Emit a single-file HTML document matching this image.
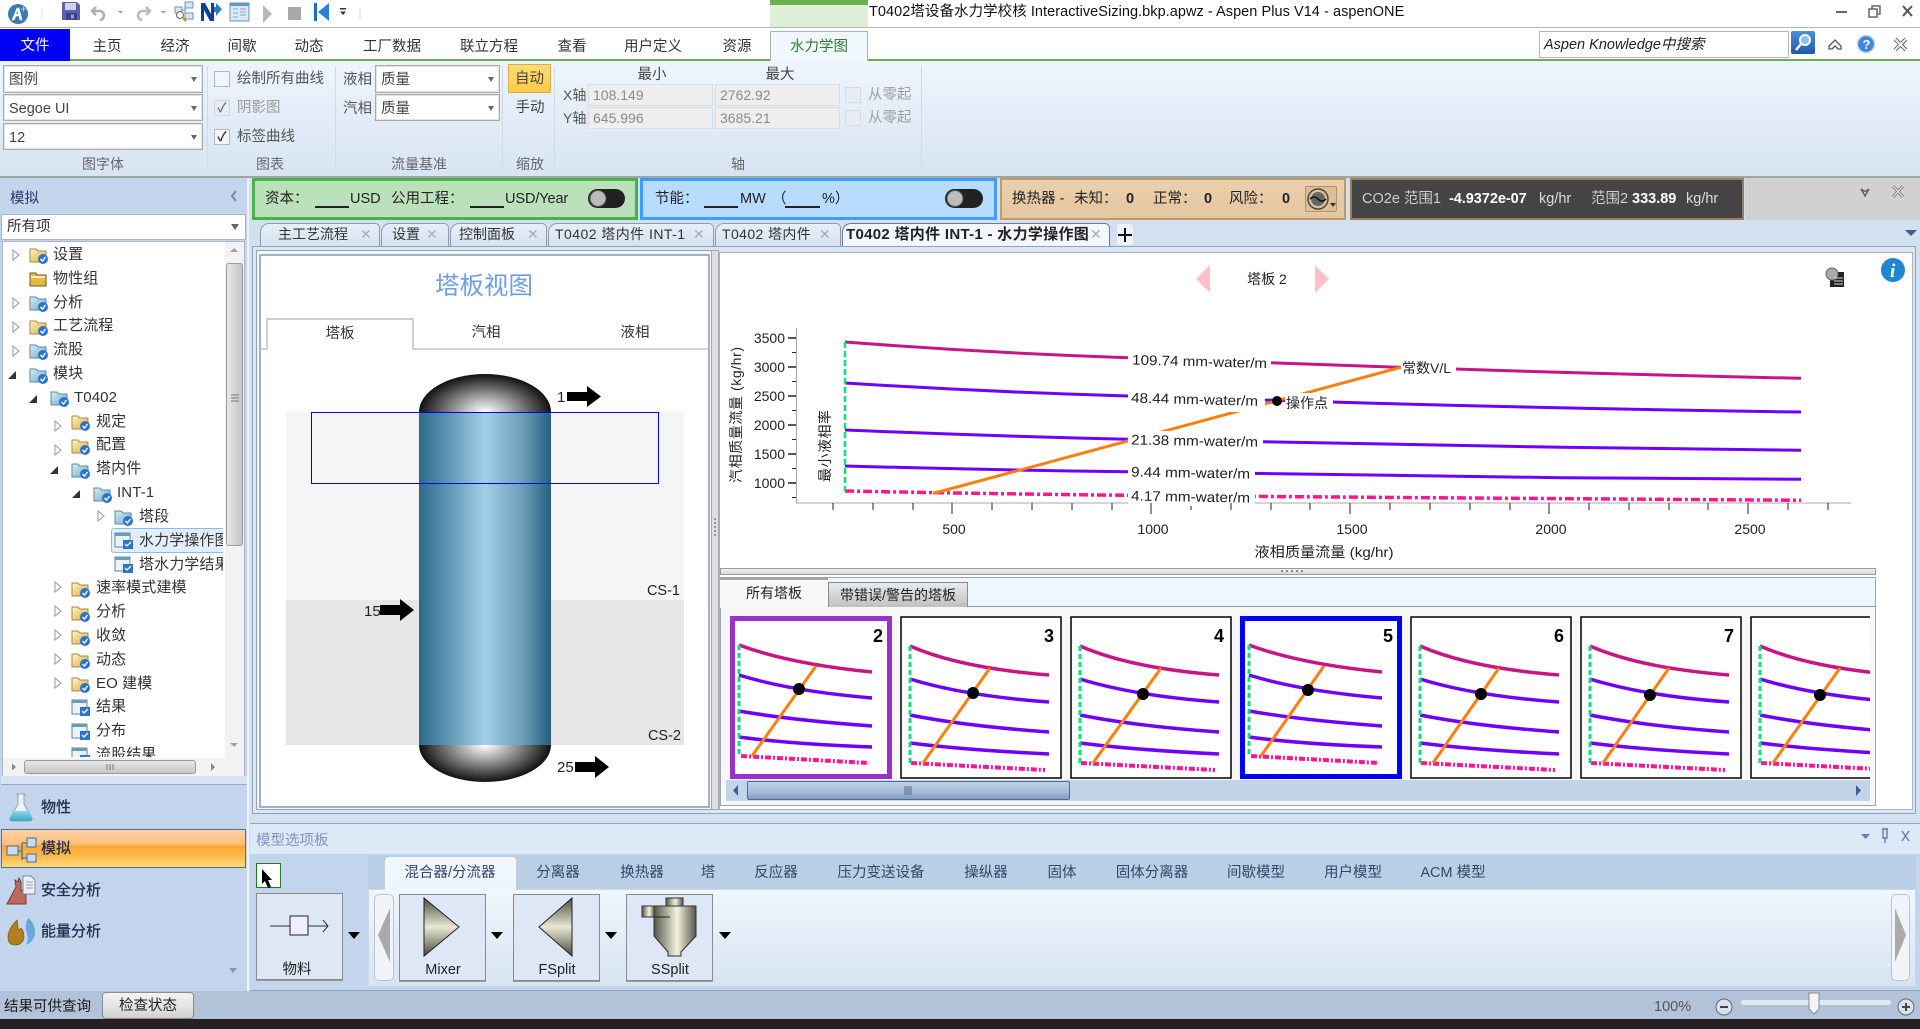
<!DOCTYPE html>
<html><head><meta charset="utf-8"><title>Aspen Plus</title>
<style>
html,body{margin:0;padding:0}
body{position:relative;width:1920px;height:1029px;overflow:hidden;background:#d3e0f0;font-family:"Liberation Sans","Noto Sans CJK SC",sans-serif;font-size:14px;color:#333}
.a{position:absolute;box-sizing:border-box}
.t{position:absolute;white-space:nowrap;line-height:20px;height:20px}
.c{transform:translateX(-50%)}
.combo{position:absolute;box-sizing:border-box;background:#fff;border:1px solid #a9a9a9;box-shadow:inset 0 0 0 1px #e4e4e4;font-size:14.5px;line-height:28px;padding-left:5px;color:#444}
.combo:after{content:"";position:absolute;right:5px;top:11px;border:3.5px solid transparent;border-top:5px solid #666}
.cb{position:absolute;box-sizing:border-box;width:16px;height:16px;border:1px solid #b0b8c4;background:#f2f5f9;border-radius:1px;text-align:center;line-height:14px;font-size:13px;font-weight:bold;color:#333}
.inp{position:absolute;box-sizing:border-box;background:#eee;border:1px solid #ddd;color:#8a8a8a;font-size:14px;line-height:20px;padding-left:4px;height:22px;width:125px}
.sep{position:absolute;width:1px;top:66px;height:104px;background:#cfdbe9}
.doc{position:absolute;box-sizing:border-box;top:223px;height:23px;background:linear-gradient(#e6eef8,#d6e2f1);border:1px solid #8b9cb0;border-bottom:none;border-radius:9px 5px 0 0;font-size:14px;line-height:21px;color:#333;white-space:nowrap}
.x{position:absolute;color:#a2adb9;font-size:14px;top:224px;line-height:20px}
.tr{position:absolute;white-space:nowrap;font-size:15px;line-height:20px;color:#333;letter-spacing:.1px}
.pt{position:absolute;top:863px;line-height:20px;font-size:14.5px;color:#33466b;white-space:nowrap;transform:translateX(-50%)}
.tool{position:absolute;box-sizing:border-box;top:894px;height:87px;width:87px;background:#dde7f6;border:1px solid #8a8a8a;box-shadow:0 1px 0 #999}
.dk{position:absolute;white-space:nowrap;line-height:20px;left:41px;font-size:15px;color:#1d2f52;-webkit-text-stroke:.3px #1d2f52}
.st{position:absolute;white-space:nowrap;line-height:20px;top:189px;font-size:14.5px;color:#222}
.ul{position:absolute;top:206px;height:2px;background:#222}
.dk2{position:absolute;white-space:nowrap;line-height:20px;top:189px;font-size:14.5px;color:#cfcfcf}
</style></head><body>

<!-- title bar -->
<div class="a" style="left:0;top:0;width:1920px;height:28px;background:#fff;border-bottom:1px solid #b6b6b6"></div>
<div class="a" style="left:770px;top:0;width:98px;height:27px;background:#deefd9"></div>
<div class="a" style="left:770px;top:0;width:98px;height:5px;background:#6ab14c"></div>
<div class="t" style="left:869px;top:2px;font-size:14.5px;color:#111;letter-spacing:.05px">T0402塔设备水力学校核 InteractiveSizing.bkp.apwz - Aspen Plus V14 - aspenONE</div>

<!-- menu -->
<div class="a" style="left:0;top:28px;width:1920px;height:33px;background:#fff;border-bottom:2px solid #6ab14c"></div>
<div class="a" style="left:0;top:29px;width:70px;height:32px;background:#0000fa"></div>
<div class="t c" style="left:35px;top:36px;color:#fff;font-size:14.5px">文件</div>
<div class="a" style="left:770px;top:31px;width:98px;height:31px;background:#f0f7fd;border:1px solid #aab4bd;border-bottom:none"></div>
<div class="t c" style="left:107px;top:37px;font-size:14.5px">主页</div>
<div class="t c" style="left:175px;top:37px;font-size:14.5px">经济</div>
<div class="t c" style="left:242px;top:37px;font-size:14.5px">间歇</div>
<div class="t c" style="left:309px;top:37px;font-size:14.5px">动态</div>
<div class="t c" style="left:392px;top:37px;font-size:14.5px">工厂数据</div>
<div class="t c" style="left:489px;top:37px;font-size:14.5px">联立方程</div>
<div class="t c" style="left:572px;top:37px;font-size:14.5px">查看</div>
<div class="t c" style="left:653px;top:37px;font-size:14.5px">用户定义</div>
<div class="t c" style="left:737px;top:37px;font-size:14.5px">资源</div>
<div class="t c" style="left:819px;top:37px;font-size:14.5px;color:#2e7d32">水力学图</div>

<!-- search -->
<div class="a" style="left:1539px;top:31px;width:250px;height:27px;background:#fff;border:1px solid #b5b5b5"></div>
<div class="t" style="left:1544px;top:35px;font-style:italic;font-size:14.5px;color:#222">Aspen Knowledge中搜索</div>

<!-- ribbon -->
<div class="a" style="left:0;top:61px;width:1920px;height:117px;background:linear-gradient(#eef5fd,#d7e4f2);border-bottom:2px solid #9aa7a5"></div>
<div class="sep" style="left:207px"></div><div class="sep" style="left:335px"></div><div class="sep" style="left:502px"></div><div class="sep" style="left:554px"></div><div class="sep" style="left:921px"></div>
<div class="combo" style="left:3px;top:65px;width:200px;height:28px">图例</div>
<div class="combo" style="left:3px;top:94px;width:200px;height:27px">Segoe UI</div>
<div class="combo" style="left:3px;top:123px;width:200px;height:27px">12</div>
<div class="cb" style="left:214px;top:71px"></div>
<div class="t" style="left:237px;top:69px;font-size:14.5px;color:#555">绘制所有曲线</div>
<div class="cb" style="left:214px;top:100px;color:#777;background:#e8edf3;border-color:#d0d6de">✓</div>
<div class="t" style="left:237px;top:98px;font-size:14.5px;color:#9a9a9a">阴影图</div>
<div class="cb" style="left:214px;top:129px">✓</div>
<div class="t" style="left:237px;top:127px;font-size:14.5px;color:#555">标签曲线</div>
<div class="t" style="left:343px;top:70px;font-size:14.5px;color:#555">液相</div>
<div class="t" style="left:343px;top:99px;font-size:14.5px;color:#555">汽相</div>
<div class="combo" style="left:375px;top:65px;width:125px;height:28px">质量</div>
<div class="combo" style="left:375px;top:94px;width:125px;height:27px">质量</div>
<div class="a" style="left:508px;top:64px;width:43px;height:29px;background:linear-gradient(#ffdc75,#ffcb45);border:1px solid #d9ac4e;text-align:center;line-height:29px;font-size:14.5px;color:#444">自动</div>
<div class="t c" style="left:530px;top:98px;font-size:14.5px;color:#444">手动</div>
<div class="t c" style="left:652px;top:65px;font-size:14.5px;color:#444">最小</div>
<div class="t c" style="left:780px;top:65px;font-size:14.5px;color:#444">最大</div>
<div class="t" style="left:563px;top:85px;font-size:14px;color:#555">X轴</div>
<div class="t" style="left:563px;top:108px;font-size:14px;color:#555">Y轴</div>
<div class="inp" style="left:588px;top:84px">108.149</div>
<div class="inp" style="left:715px;top:84px">2762.92</div>
<div class="inp" style="left:588px;top:107px">645.996</div>
<div class="inp" style="left:715px;top:107px">3685.21</div>
<div class="cb" style="left:845px;top:87px;background:#e9edf2;border-color:#d6dbe2"></div>
<div class="cb" style="left:845px;top:110px;background:#e9edf2;border-color:#d6dbe2"></div>
<div class="t" style="left:868px;top:85px;font-size:14.5px;color:#a0a0a0">从零起</div>
<div class="t" style="left:868px;top:108px;font-size:14.5px;color:#a0a0a0">从零起</div>
<div class="t c" style="left:103px;top:154px;color:#666">图字体</div>
<div class="t c" style="left:270px;top:154px;color:#666">图表</div>
<div class="t c" style="left:419px;top:154px;color:#666">流量基准</div>
<div class="t c" style="left:530px;top:154px;color:#666">缩放</div>
<div class="t c" style="left:738px;top:154px;color:#666">轴</div>

<!-- left panel -->
<div class="a" style="left:0;top:178px;width:249px;height:813px;background:#c3d5ec;border-right:2px solid #eef3f9"></div>
<div class="t" style="left:10px;top:189px;font-size:14.5px;color:#24396a">模拟</div>
<div class="a" style="left:1px;top:214px;width:245px;height:26px;background:#fff;border:1px solid #a9b5c4"></div>
<div class="t" style="left:7px;top:217px;font-size:14.5px">所有项</div>
<div class="a" style="left:231px;top:224px;border:4px solid transparent;border-top:6px solid #666"></div>
<div class="a" style="left:2px;top:241px;width:243px;height:535px;background:#fff;border:1px solid #a9b8ca"></div>
<div class="a" style="left:1px;top:776px;width:246px;height:9px;background:#d6e3f2;border-bottom:1px solid #93a9c6"></div>

<!-- tree -->
<div class="a" style="left:3px;top:242px;width:220px;height:515px;overflow:hidden">
<div class="a" style="left:108px;top:286px;width:120px;height:25px;background:#e2effb;border:1px solid #8dbbe8;border-radius:3px"></div>
<div class="tr" style="left:50px;top:3px">设置</div>
<div class="tr" style="left:50px;top:27px">物性组</div>
<div class="tr" style="left:50px;top:51px">分析</div>
<div class="tr" style="left:50px;top:74px">工艺流程</div>
<div class="tr" style="left:50px;top:98px">流股</div>
<div class="tr" style="left:50px;top:122px">模块</div>
<div class="tr" style="left:71px;top:146px">T0402</div>
<div class="tr" style="left:93px;top:170px">规定</div>
<div class="tr" style="left:93px;top:193px">配置</div>
<div class="tr" style="left:93px;top:217px">塔内件</div>
<div class="tr" style="left:114px;top:241px">INT-1</div>
<div class="tr" style="left:136px;top:265px">塔段</div>
<div class="tr" style="left:136px;top:289px">水力学操作图</div>
<div class="tr" style="left:136px;top:313px">塔水力学结果</div>
<div class="tr" style="left:93px;top:336px">速率模式建模</div>
<div class="tr" style="left:93px;top:360px">分析</div>
<div class="tr" style="left:93px;top:384px">收敛</div>
<div class="tr" style="left:93px;top:408px">动态</div>
<div class="tr" style="left:93px;top:432px">EO 建模</div>
<div class="tr" style="left:93px;top:455px">结果</div>
<div class="tr" style="left:93px;top:479px">分布</div>
<div class="tr" style="left:93px;top:503px">流股结果</div>
</div>

<!-- tree v-scroll / h-scroll -->
<div class="a" style="left:225px;top:242px;width:19px;height:516px;background:#f2f2f2"></div>
<div class="a" style="left:226px;top:263px;width:17px;height:283px;background:linear-gradient(90deg,#e8e8e8,#c4c4c4);border:1px solid #9a9a9a;border-radius:3px"></div>
<div class="a" style="left:3px;top:758px;width:241px;height:18px;background:#f2f2f2"></div>
<div class="a" style="left:24px;top:760px;width:172px;height:14px;background:linear-gradient(#e8e8e8,#c6c6c6);border:1px solid #9a9a9a;border-radius:3px"></div>

<!-- dock -->
<div class="a" style="left:1px;top:829px;width:245px;height:39px;background:linear-gradient(#fdd3a6 0,#fdbd78 40%,#ffa733 42%,#ffb84a 70%,#ffdb7a 100%);border:1px solid #4e6f9c"></div>
<div class="dk" style="top:798px">物性</div>
<div class="dk" style="top:839px">模拟</div>
<div class="dk" style="top:881px">安全分析</div>
<div class="dk" style="top:922px">能量分析</div>

<!-- status strip -->
<div class="a" style="left:252px;top:178px;width:386px;height:42px;background:#bbe1bb;border:3px solid #4ab04a"></div>
<div class="st" style="left:265px">资本：</div><div class="ul" style="left:315px;width:34px"></div><div class="st" style="left:350px">USD</div>
<div class="st" style="left:391px">公用工程：</div><div class="ul" style="left:470px;width:34px"></div><div class="st" style="left:505px;letter-spacing:-.1px">USD/Year</div>
<div class="a" style="left:640px;top:178px;width:357px;height:42px;background:#b7dcff;border:3px solid #3e9dff"></div>
<div class="st" style="left:655px">节能：</div><div class="ul" style="left:704px;width:34px"></div><div class="st" style="left:740px">MW</div>
<div class="st" style="left:772px">（</div><div class="ul" style="left:785px;width:35px"></div><div class="st" style="left:822px">%）</div>
<div class="a" style="left:1000px;top:178px;width:346px;height:42px;background:linear-gradient(#ebcfac,#e4c6a0);border:2px solid #bd9b6d"></div>
<div class="st" style="left:1012px">换热器 -</div>
<div class="st" style="left:1074px">未知：</div><div class="st" style="left:1126px;font-weight:bold">0</div>
<div class="st" style="left:1153px">正常：</div><div class="st" style="left:1204px;font-weight:bold">0</div>
<div class="st" style="left:1229px">风险：</div><div class="st" style="left:1282px;font-weight:bold">0</div>
<div class="a" style="left:1305px;top:186px;width:32px;height:26px;background:#dcbf97;border:1px solid #b3946a;border-radius:2px"></div>
<div class="a" style="left:1350px;top:178px;width:394px;height:42px;background:#454545;border:2px solid #9b7f5c"></div>
<div class="dk2" style="left:1362px">CO2e 范围1</div>
<div class="dk2" style="left:1449px;font-weight:bold;color:#fff;letter-spacing:-.05px">-4.9372e-07</div>
<div class="dk2" style="left:1539px;color:#ddd">kg/hr</div>
<div class="dk2" style="left:1591px">范围2</div>
<div class="dk2" style="left:1632px;font-weight:bold;color:#fff">333.89</div>
<div class="dk2" style="left:1686px;color:#ddd">kg/hr</div>
<div class="a" style="left:1745px;top:178px;width:175px;height:42px;background:#d1d1d1"></div>

<!-- document tabs -->
<div class="doc" style="left:260px;width:120px;padding-left:17px">主工艺流程</div><div class="x" style="left:360px">✕</div>
<div class="doc" style="left:381px;width:68px;padding-left:10px">设置</div><div class="x" style="left:426px">✕</div>
<div class="doc" style="left:450px;width:97px;padding-left:8px">控制面板</div><div class="x" style="left:527px">✕</div>
<div class="doc" style="left:548px;width:166px;padding-left:6px;letter-spacing:.45px">T0402 塔内件 INT-1</div><div class="x" style="left:693px">✕</div>
<div class="doc" style="left:715px;width:126px;padding-left:6px;letter-spacing:.4px">T0402 塔内件</div><div class="x" style="left:819px">✕</div>
<div class="doc" style="left:842px;width:268px;padding-left:3px;background:#f3f6fa;font-weight:bold;font-size:15px;letter-spacing:.3px;color:#222;border-color:#6b7a8c">T0402 塔内件 INT-1 - 水力学操作图</div><div class="x" style="left:1090px">✕</div>
<div class="a" style="left:1117px;top:224px;width:16px;height:21px;background:#eef3fa;border-radius:3px"></div>

<!-- content frames -->
<div class="a" style="left:252px;top:246px;width:1664px;height:568px;background:#dbe6f3;border:1px solid #8fa3ba"></div>
<div class="a" style="left:256px;top:250px;width:456px;height:560px;border:1px solid #8fa3ba;background:#f2f6fb"></div>
<div class="a" style="left:259px;top:254px;width:451px;height:554px;background:#fff;border:2px solid #a3b1c2"></div>
<div class="a" style="left:711px;top:250px;width:8px;height:560px;background:#dfdfdf;border:1px solid #a9a9a9"></div>
<div class="a" style="left:719px;top:252px;width:1194px;height:558px;background:#fff;border:1px solid #a3b1c2"></div>

<!-- left column diagram -->
<div class="t c" style="left:484px;top:274px;font-size:24.5px;line-height:26px;height:26px;color:#6d9fe6">塔板视图</div>
<div class="a" style="left:261px;top:348px;width:447px;height:2px;background:#d4d4d4"></div>
<div class="a" style="left:266px;top:318px;width:148px;height:32px;background:#fff;border:2px solid #d0d0d0;border-bottom:none"></div>
<div class="t c" style="left:340px;top:324px;font-size:14.5px;color:#333">塔板</div>
<div class="t c" style="left:486px;top:323px;font-size:14.5px;color:#333">汽相</div>
<div class="t c" style="left:635px;top:323px;font-size:14.5px;color:#333">液相</div>
<div class="a" style="left:286px;top:412px;width:398px;height:188px;background:#f5f5f5"></div>
<div class="a" style="left:286px;top:600px;width:398px;height:145px;background:#e6e6e6"></div>
<div class="a" style="left:419px;top:374px;width:132px;height:38px;border-radius:66px 66px 0 0/38px 38px 0 0;background:radial-gradient(ellipse 66px 38px at 50% 100%,#fff 0,#bbb 30%,#666 65%,#111 100%)"></div>
<div class="a" style="left:419px;top:745px;width:132px;height:37px;border-radius:0 0 66px 66px/0 0 37px 37px;background:radial-gradient(ellipse 66px 37px at 50% 0,#fff 0,#bbb 30%,#666 65%,#111 100%)"></div>
<div class="a" style="left:419px;top:412px;width:132px;height:333px;background:linear-gradient(90deg,#2c6a8d 0,#5a92b0 20%,#a2cfe6 50%,#6d9fba 78%,#285f80 100%)"></div>
<div class="a" style="left:311px;top:412px;width:348px;height:72px;border:1.5px solid #0000f0"></div>
<div class="t" style="left:557px;top:388px;font-size:15px;color:#222">1</div>
<div class="t" style="left:364px;top:602px;font-size:15px;color:#222">15</div>
<div class="t" style="left:557px;top:758px;font-size:15px;color:#222">25</div>
<div class="t" style="right:1240px;top:581px;font-size:14.5px;color:#222">CS-1</div>
<div class="t" style="right:1239px;top:726px;font-size:14.5px;color:#222">CS-2</div>

<!-- lower right panel -->
<div class="a" style="left:720px;top:568px;width:1156px;height:7px;background:linear-gradient(#eee,#d8d8d8);border:1px solid #9a9a9a"></div>
<div class="a" style="left:720px;top:577px;width:1156px;height:229px;background:#f7f7f7;border:1px solid #9aa6b3"></div>
<div class="a" style="left:721px;top:578px;width:1154px;height:29px;background:#eef6fe;border-bottom:1px solid #8f9aa6"></div>
<div class="a" style="left:720px;top:578px;width:108px;height:30px;background:#f7f7f7;border-top:2px solid #a5a5a5"></div>
<div class="a" style="left:828px;top:582px;width:140px;height:25px;background:linear-gradient(#eaeaea,#c0c0c0);border:1px solid #8a8a8a;border-bottom:none"></div>
<div class="t c" style="left:774px;top:583px;font-size:14px;color:#222">所有塔板</div>
<div class="t c" style="left:898px;top:585px;font-size:14px;color:#222">带错误/警告的塔板</div>
<div class="a" style="left:726px;top:780px;width:1144px;height:21px;background:#c2d4ea"></div>
<div class="a" style="left:747px;top:781px;width:323px;height:19px;background:linear-gradient(#bdd1e9,#a4bbd9 60%,#7f9cc1);border:1px solid #4f6c92;border-radius:2px"></div>

<!-- palette -->
<div class="a" style="left:250px;top:823px;width:1670px;height:168px;background:#c3d5ec;border-top:1px solid #8fa3ba;border-bottom:1px solid #8fa3ba"></div>
<div class="a" style="left:250px;top:824px;width:1670px;height:30px;background:#dde9f6"></div>
<div class="t" style="left:256px;top:831px;font-size:14.5px;color:#7f95c6">模型选项板</div>
<div class="a" style="left:368px;top:855px;width:1548px;height:34px;background:#bacee6"></div>
<div class="a" style="left:368px;top:889px;width:1548px;height:98px;background:linear-gradient(#f0f6fd,#d6e4f2);border:1px solid #c8d8ea"></div>
<div class="a" style="left:385px;top:857px;width:131px;height:33px;background:linear-gradient(#f3f8fe,#edf4fc);border-radius:4px 4px 0 0"></div>
<div class="pt" style="left:450px">混合器/分流器</div>
<div class="pt" style="left:558px">分离器</div>
<div class="pt" style="left:642px">换热器</div>
<div class="pt" style="left:708px">塔</div>
<div class="pt" style="left:776px">反应器</div>
<div class="pt" style="left:881px">压力变送设备</div>
<div class="pt" style="left:986px">操纵器</div>
<div class="pt" style="left:1062px">固体</div>
<div class="pt" style="left:1152px">固体分离器</div>
<div class="pt" style="left:1256px">间歇模型</div>
<div class="pt" style="left:1353px">用户模型</div>
<div class="pt" style="left:1453px">ACM 模型</div>
<div class="a" style="left:256px;top:863px;width:25px;height:25px;background:#fff;border:1px solid #1a7f1a"></div>
<div class="tool" style="left:256px;top:893px"></div>
<div class="a" style="left:374px;top:894px;width:20px;height:87px;background:#f0f3f7;border:1px solid #bcc5cf;border-radius:5px"></div>
<div class="a" style="left:1891px;top:894px;width:19px;height:87px;background:#f0f3f7;border:1px solid #bcc5cf;border-radius:5px"></div>
<div class="tool" style="left:399px"></div><div class="tool" style="left:513px"></div><div class="tool" style="left:626px"></div>
<div class="t c" style="left:297px;top:960px;font-size:14.5px;color:#222">物料</div>
<div class="t c" style="left:443px;top:960px;font-size:14.5px;color:#222">Mixer</div>
<div class="t c" style="left:557px;top:960px;font-size:14.5px;color:#222">FSplit</div>
<div class="t c" style="left:670px;top:960px;font-size:14.5px;color:#222">SSplit</div>

<!-- status bar -->
<div class="a" style="left:0;top:991px;width:1920px;height:28px;background:#b2c2d8"></div>
<div class="t" style="left:4px;top:997px;font-size:14.5px;color:#1a1a1a">结果可供查询</div>
<div class="a" style="left:102px;top:992px;width:92px;height:27px;background:linear-gradient(#f3f3f3,#e2e2e2 60%,#cfcfcf);border:1px solid #8d8d8d;border-radius:4px;text-align:center;line-height:27px;font-size:14.5px;color:#222">检查状态</div>
<div class="t" style="left:1654px;top:997px;font-size:14.5px;color:#555">100%</div>
<div class="a" style="left:1741px;top:1000px;width:150px;height:5px;background:#dfe7f1;border-radius:3px"></div>
<div class="a" style="left:0;top:1019px;width:1920px;height:10px;background:#261f22"></div>

<!-- SVG overlay: icons and chart -->
<svg class="a" style="left:0;top:0;pointer-events:none" width="1920" height="1029" viewBox="0 0 1920 1029">
<defs>
<linearGradient id="gv" x1="0" y1="0" x2="0" y2="1"><stop offset="0" stop-color="#4c4c40"/><stop offset=".5" stop-color="#e8e8d4"/><stop offset="1" stop-color="#4c4c40"/></linearGradient>
<linearGradient id="gh" x1="0" y1="0" x2="1" y2="0"><stop offset="0" stop-color="#55554a"/><stop offset=".55" stop-color="#f4f4e0"/><stop offset="1" stop-color="#55554a"/></linearGradient>
<linearGradient id="gy" x1="0" y1="0" x2="1" y2="1"><stop offset="0" stop-color="#fff4c4"/><stop offset="1" stop-color="#e0a93a"/></linearGradient>
<linearGradient id="gb" x1="0" y1="0" x2="1" y2="1"><stop offset="0" stop-color="#d8eef6"/><stop offset="1" stop-color="#6ea8c6"/></linearGradient>
<linearGradient id="fl" x1="0" y1="0" x2="0" y2="1"><stop offset="0" stop-color="#8ad8ec"/><stop offset="1" stop-color="#3aa7c9"/></linearGradient>
<linearGradient id="sb" x1="0" y1="0" x2="0" y2="1"><stop offset="0" stop-color="#4e8fd8"/><stop offset="1" stop-color="#1f5aa8"/></linearGradient>
<symbol id="chk" viewBox="0 0 10 10"><circle cx="5" cy="5" r="5" fill="#2b73d0"/><path d="M2.500 5l2 2 3-4" stroke="#fff" stroke-width="1.400" fill="none"/></symbol>
<symbol id="fy" viewBox="0 0 20 18"><path d="M1 3h6l2 2h8v11H1z" fill="url(#gy)" stroke="#a88a4c"/><use href="#chk" x="9" y="8" width="10" height="10"/></symbol>
<symbol id="fb" viewBox="0 0 20 18"><path d="M1 3h6l2 2h8v11H1z" fill="url(#gb)" stroke="#5d8aa6"/><use href="#chk" x="9" y="8" width="10" height="10"/></symbol>
<symbol id="fp" viewBox="0 0 20 18"><path d="M1 3h6l1 2h9v11H1z" fill="#e8b93f" stroke="#6e5a26"/><path d="M2 7h14" stroke="#fff3c0" stroke-width="2"/></symbol>
<symbol id="fm" viewBox="0 0 20 18"><rect x="1" y="1" width="15" height="14" fill="#eaf3f9" stroke="#5d8aa6"/><rect x="1" y="1" width="15" height="3" fill="#6d9cb8"/><rect x="9" y="8" width="10" height="9" fill="#2b73d0"/><path d="M11 12l2 2 4-4" stroke="#fff" stroke-width="1.300" fill="none"/></symbol>
</defs>

<!-- QAT icons -->
<circle cx="18" cy="14" r="10" fill="#3c7ab0"/><path d="M12 20l5-12h2l3 12h-2l-1-4h-3l-2 4zM15.500 14h3l-.8-3.500zM21 9h5M23.500 6.500v5" fill="#fff" stroke="#fff" stroke-width=".6"/>
<path d="M42 8v11M360 8v11" stroke="#ddd"/>
<path d="M62 2h15l3 3v15H62z" fill="#5d62ad"/><rect x="65" y="3" width="11" height="7" fill="#cfd1ee"/><rect x="66" y="13" width="11" height="7" fill="#3d4088"/><rect x="71" y="14.500" width="3" height="4" fill="#9a9cd0"/>
<path d="M96 7l-4 4 4 4M92 11h7a4.500 4.500 0 0 1 1 9" stroke="#aab0b8" stroke-width="2.500" fill="none"/>
<path d="M118 11h5l-2.500 2.500zM161 11h5l-2.500 2.500z" fill="#999"/>
<path d="M146 7l4 4-4 4M150 11h-7a4.500 4.500 0 0 0-1 9" stroke="#b4bbc2" stroke-width="2.500" fill="none"/>
<g fill="#d6e7f7" stroke="#6f93b5"><rect x="185" y="2" width="8" height="6"/><rect x="175" y="7" width="7" height="6"/><rect x="185" y="13" width="8" height="6"/></g><path d="M182 10h3M185 5v11" stroke="#6f93b5" fill="none"/><circle cx="180" cy="15" r="3.500" fill="#fff" stroke="#777" stroke-width="1.200"/><path d="M183 18l3 3" stroke="#c6912a" stroke-width="2"/>
<path d="M201 21V3h4l6 11V3h3v18h-4l-6-11v11z" fill="#0d3f96"/><path d="M214 7h2V3l6 6-6 7v-4h-2z" fill="#2a78c8"/>
<rect x="230" y="3" width="19" height="18" fill="#dce9f5" stroke="#6f93b5"/><rect x="230" y="3" width="19" height="3" fill="#5f9ad0"/><path d="M233 9h5M233 13h5M233 17h5M240 9h6M240 12h6M240 15h6" stroke="#8ea6ba"/>
<path d="M263 5l9 9-9 9z" fill="#b8b8b8"/><rect x="288" y="7" width="13" height="13" fill="#a9a9a9"/>
<path d="M314 3h3v18h-3z" fill="#1f6fc0"/><path d="M329 3l-11 9 11 9z" fill="#2a82d6"/>
<path d="M340 8h6v1.500h-6zM340 11.500h6l-3 3.500z" fill="#333"/>

<!-- window buttons -->
<path d="M1836 12h11" stroke="#666" stroke-width="2"/>
<path d="M1869 9h8v8h-8zM1872 9V6h8v8h-3" stroke="#666" stroke-width="1.500" fill="none"/>
<path d="M1903 6l9 10M1912 6l-9 10" stroke="#555" stroke-width="2"/>
<!-- search row -->
<rect x="1791" y="31" width="24" height="23" rx="2" fill="url(#sb)"/><circle cx="1805" cy="40" r="5" fill="#8cc0ee" stroke="#fff" stroke-width="2"/><path d="M1801 44l-5 6" stroke="#fff" stroke-width="2.500"/>
<path d="M1829 49h3l3-3 3 3h3v-3l-6-6-6 6z" fill="#eef3f8" stroke="#555" stroke-width="1.300"/>
<circle cx="1866" cy="44" r="8.500" fill="#3c86dc" stroke="#b8d4ee" stroke-width="1.500"/><text x="1862.500" y="49" font-size="13" font-weight="bold" fill="#fff" font-family="Liberation Sans">?</text>
<path d="M1895 39l11 11M1906 39l-11 11" stroke="#666" stroke-width="4"/>
<path d="M1895 39l11 11M1906 39l-11 11" stroke="#eef2f6" stroke-width="2"/>

<!-- left panel small -->
<path d="M236 191l-4 5 4 5" stroke="#7c8795" stroke-width="2" fill="none"/>
<path d="M230 252l4-4 4 4zM230 743l4 4 4-4z" fill="#a0a0a0"/>
<path d="M231 395h8M231 398h8M231 401h8" stroke="#777"/>
<path d="M16 767l-4-3.500v7zM211 763v8l4-4z" fill="#888"/>
<path d="M107 764v6M110 764v6M113 764v6" stroke="#777"/>

<!-- tree arrows -->
<g fill="#fff" stroke="#9a9a9a">
<path d="M13 250l6 5-6 5z"/><path d="M13 298l6 5-6 5z"/><path d="M13 322l6 5-6 5z"/><path d="M13 346l6 5-6 5z"/>
<path d="M55 421l6 5-6 5z"/><path d="M55 445l6 5-6 5z"/><path d="M98 511l6 5-6 5z"/>
<path d="M55 582l6 5-6 5z"/><path d="M55 606l6 5-6 5z"/><path d="M55 630l6 5-6 5z"/><path d="M55 654l6 5-6 5z"/><path d="M55 678l6 5-6 5z"/>
</g>
<g fill="#333">
<path d="M8 379h8v-8z"/><path d="M29 403h8v-8z"/><path d="M50 474h8v-8z"/><path d="M72 498h8v-8z"/>
</g>
<!-- tree icons -->
<use href="#fy" x="29" y="246" width="20" height="18"/>
<use href="#fp" x="29" y="270" width="20" height="18"/>
<use href="#fb" x="29" y="294" width="20" height="18"/>
<use href="#fy" x="29" y="318" width="20" height="18"/>
<use href="#fb" x="29" y="342" width="20" height="18"/>
<use href="#fb" x="29" y="366" width="20" height="18"/>
<use href="#fb" x="50" y="389" width="20" height="18"/>
<use href="#fy" x="71" y="413" width="20" height="18"/>
<use href="#fy" x="71" y="437" width="20" height="18"/>
<use href="#fb" x="71" y="461" width="20" height="18"/>
<use href="#fb" x="93" y="485" width="20" height="18"/>
<use href="#fb" x="114" y="508" width="20" height="18"/>
<use href="#fm" x="114" y="532" width="20" height="18"/>
<use href="#fm" x="114" y="556" width="20" height="18"/>
<use href="#fy" x="71" y="580" width="20" height="18"/>
<use href="#fy" x="71" y="604" width="20" height="18"/>
<use href="#fy" x="71" y="628" width="20" height="18"/>
<use href="#fy" x="71" y="651" width="20" height="18"/>
<use href="#fy" x="71" y="675" width="20" height="18"/>
<use href="#fm" x="71" y="699" width="20" height="18"/>
<use href="#fm" x="71" y="723" width="20" height="18"/>
<svg x="71" y="745" width="20" height="12" viewBox="0 0 20 12"><use href="#fm" x="0" y="2" width="20" height="18"/></svg>

<!-- dock icons -->
<path d="M17 794h8v1h-1v9l8 14q1 3-3 3H13q-4 0-3-3l8-14v-9h-1z" fill="#eff2f2" stroke="#9aa4a8"/><path d="M13 811h16l3 7q1 3-3 3H13q-4 0-3-3z" fill="url(#fl)"/>
<path d="M18 851h4M22 843v17M22 843h5M22 858h5" stroke="#4a6a96" fill="none" stroke-width="1.300"/>
<g fill="#c7dbf2" stroke="#4a6a96"><rect x="7" y="846" width="11" height="9"/><rect x="27" y="838" width="9" height="9"/><rect x="27" y="854" width="9" height="8"/></g>
<path d="M7 904l9-17-1-7 3 2 1-4 2 4 0 9 5-3 0 16z" fill="#b96a60" stroke="#7a3a34"/><path d="M23 876h8l4 4v14H23z" fill="#eef1f4" stroke="#7a8a99"/><path d="M26 882h7M26 885h7M26 888h7" stroke="#99a"/>
<path d="M17 920q-9 9-9 17 0 8 7 8t9-7q0-8-3-10-2 3-3 0 0-4-1-8z" fill="#b07f1e" stroke="#6d4f10" stroke-width=".6"/><path d="M28 918q7 5 7 14 0 9-9 13 3-6 1-11-3-8 1-16z" fill="#6aa6dc"/>
<path d="M229 968h8l-4 5z" fill="#7f98bc"/>

<!-- status toggles and icons -->
<g>
<rect x="588" y="189" width="37" height="19" rx="9.500" fill="#222"/><circle cx="598" cy="198.500" r="8" fill="#bbb" stroke="#555"/>
<rect x="945" y="189" width="38" height="19" rx="9.500" fill="#222"/><circle cx="955" cy="198.500" r="8" fill="#bbb" stroke="#555"/>
<circle cx="1318" cy="199" r="10" fill="#d8c09c" stroke="#444" stroke-width="1.400"/><circle cx="1318" cy="199" r="7" fill="#666"/><path d="M1310 199q4-4 8 0t8 0" stroke="#111" fill="none" stroke-width="1.500"/><path d="M1330 203h6l-3 4z" fill="#333"/>
</g>
<path d="M1861 189l4 7 4-7M1861 189l4 2.500 4-2.500" stroke="#555" stroke-width="1.300" fill="none"/>
<path d="M1893 186l10 11M1903 186l-10 11" stroke="#7f7f7f" stroke-width="3"/><path d="M1893 186l10 11M1903 186l-10 11" stroke="#eee" stroke-width="1"/>

<!-- doc tab extras -->
<path d="M1125 228v14M1118 235h14" stroke="#111" stroke-width="2"/>
<path d="M1905 230h12l-6 6z" fill="#3a5e8e"/>
<g fill="#999"><rect x="714" y="518" width="2" height="2"/><rect x="714" y="522" width="2" height="2"/><rect x="714" y="526" width="2" height="2"/><rect x="714" y="530" width="2" height="2"/><rect x="714" y="534" width="2" height="2"/></g>

<!-- stream arrows -->
<path d="M567 392h20v-6l14 10.500-14 10.500v-6h-20zM380 605h20v-6l14 11-14 11v-6h-20zM575 762h20v-6l14 11-14 11v-6h-20z" fill="#000"/>

<!-- chart nav -->
<path d="M1210 265v28l-14-14z" fill="#ffc0cb"/><path d="M1315 265v28l14-14z" fill="#ffc0cb"/>
<text x="1267" y="284" text-anchor="middle" font-size="14" fill="#222" font-family="Liberation Sans,Noto Sans CJK SC,sans-serif">塔板 2</text>
<circle cx="1893" cy="270" r="12" fill="#1f86cf"/><text x="1890" y="277" font-size="19" font-weight="bold" font-style="italic" fill="#fff" font-family="Liberation Serif">i</text>
<rect x="1830" y="272" width="14" height="15" fill="#222"/><circle cx="1832" cy="274" r="6" fill="#aaa" stroke="#666"/><path d="M1834 278h9M1834 281h9M1834 284h9" stroke="#ddd"/>

<!-- chart axes -->
<path d="M796.500 328V503H1851" stroke="#aaa" fill="none"/>
<g stroke="#222"><path d="M788 338h8M788 367h8M788 396h8M788 425h8M788 454h8M788 483h8" stroke-width="1.500"/>
<path d="M792 352.500h4M792 381.500h4M792 410.500h4M792 439.500h4M792 468.500h4M792 497.500h4"/>
<path d="M833 503v7M873 503v7M913 503v7M952 503v11M992 503v7M1032 503v7M1072 503v7M1112 503v7M1151 503v11M1191 503v7M1231 503v7M1271 503v7M1310 503v7M1350 503v11M1390 503v7M1430 503v7M1470 503v7M1510 503v7M1549 503v11M1589 503v7M1629 503v7M1669 503v7M1708 503v7M1748 503v11M1788 503v7M1828 503v7"/></g>
<g font-family="Liberation Sans,Noto Sans CJK SC,sans-serif" fill="#222" font-size="14">
<text x="785" y="343" text-anchor="end">3500</text><text x="785" y="372" text-anchor="end">3000</text><text x="785" y="401" text-anchor="end">2500</text><text x="785" y="430" text-anchor="end">2000</text><text x="785" y="459" text-anchor="end">1500</text><text x="785" y="488" text-anchor="end">1000</text>
<text x="954" y="534" text-anchor="middle">500</text><text x="1153" y="534" text-anchor="middle">1000</text><text x="1352" y="534" text-anchor="middle">1500</text><text x="1551" y="534" text-anchor="middle">2000</text><text x="1750" y="534" text-anchor="middle">2500</text>
<text x="1324" y="557" text-anchor="middle" textLength="139" lengthAdjust="spacingAndGlyphs">液相质量流量 (kg/hr)</text>
<text transform="translate(741,415) rotate(-90)" text-anchor="middle" font-size="14" textLength="136">汽相质量流量 (kg/hr)</text>
<text transform="translate(830,446) rotate(-90)" text-anchor="middle" font-size="14" textLength="72">最小液相率</text>
</g>
<!-- curves -->
<g fill="none" stroke-width="3">
<path d="M845 342Q988 353 1128 357.700T1401 367.300Q1600 374 1801 378.300" stroke="#c71585"/>
<path d="M845 383Q988 392 1128 396T1332 402Q1570 409 1801 412" stroke="#6f00ff"/>
<path d="M845 430Q988 436 1128 439.300T1562 447.300L1801 450.300" stroke="#6f00ff"/>
<path d="M845 466Q988 470 1128 471.700T1562 477.700L1801 479.300" stroke="#6f00ff"/>
<path d="M845 491Q1000 494 1128 495.300T1801 500.300" stroke="#ff1493" stroke-width="3.500" stroke-dasharray="9 3 3 3"/>
<path d="M933 493.500L1401 367.300" stroke="#ff7f0e"/>
<path d="M845 342V491" stroke="#00e676" stroke-width="2.500" stroke-dasharray="6 3"/>
</g>
<!-- chart labels with white backing -->
<g fill="#fff"><rect x="1128" y="350" width="143" height="22"/><rect x="1128" y="390" width="137" height="22"/><rect x="1128" y="431" width="135" height="22"/><rect x="1128" y="463" width="127" height="22"/><rect x="1128" y="488" width="127" height="18"/><rect x="1401" y="358" width="55" height="20"/><rect x="1285" y="393" width="48" height="20"/></g>
<path d="M1151 503v11M1231 503v7" stroke="#222"/>
<g font-family="Liberation Sans,Noto Sans CJK SC,sans-serif" fill="#222" font-size="14">
<text x="1132" y="364.500" textLength="135" lengthAdjust="spacingAndGlyphs" transform="rotate(1.500 1132 364.500)">109.74 mm-water/m</text>
<text x="1131" y="402.500" textLength="127" lengthAdjust="spacingAndGlyphs" transform="rotate(1.500 1131 402.500)">48.44 mm-water/m</text>
<text x="1131" y="444.500" textLength="127" lengthAdjust="spacingAndGlyphs" transform="rotate(1 1131 444.500)">21.38 mm-water/m</text>
<text x="1131" y="476.500" textLength="119" lengthAdjust="spacingAndGlyphs" transform="rotate(1 1131 476.500)">9.44 mm-water/m</text>
<text x="1131" y="500.500" textLength="119" lengthAdjust="spacingAndGlyphs" transform="rotate(1 1131 500.500)">4.17 mm-water/m</text>
<text x="1402" y="373" font-size="14">常数V/L</text>
<text x="1286" y="408" font-size="14">操作点</text>
</g>
<circle cx="1277" cy="401" r="5" fill="#000"/>
<g fill="#8a8a8a"><rect x="1281" y="570" width="2" height="2"/><rect x="1286" y="570" width="2" height="2"/><rect x="1291" y="570" width="2" height="2"/><rect x="1296" y="570" width="2" height="2"/><rect x="1301" y="570" width="2" height="2"/></g>

<!-- thumbnails -->
<g font-family="Liberation Sans,sans-serif" font-weight="bold" font-size="18" fill="#000" text-anchor="end">
<svg x="730" y="616" width="162" height="163" viewBox="0 0 162 163"><rect x="2.500" y="2.500" width="157" height="158" fill="#fff" stroke="#9932cc" stroke-width="5"/><g fill="none" stroke-width="3.500"><path d="M9 29Q60 48 142 56" stroke="#c71585"/><path d="M9 59Q60 75 142 82" stroke="#6f00ff"/><path d="M9 95Q60 104 142 110" stroke="#6f00ff"/><path d="M9 121Q60 128 142 131" stroke="#6f00ff"/><path d="M11 140L139 147" stroke="#ff1493" stroke-width="4" stroke-dasharray="6 2 2 2"/><path d="M22 140L86 50" stroke="#ff7f0e" stroke-width="3"/><path d="M9 29V140" stroke="#00e676" stroke-width="3" stroke-dasharray="5 3"/></g><circle cx="69" cy="73" r="6" fill="#000"/><text x="153" y="26">2</text></svg>
<svg x="900" y="616" width="162" height="163" viewBox="0 0 162 163"><rect x="1" y="1" width="160" height="161" fill="#fff" stroke="#000" stroke-width="1.500"/><g fill="none" stroke-width="3.500"><path d="M10 30Q60 52 149 59" stroke="#c71585"/><path d="M10 63Q65 80 149 86" stroke="#6f00ff"/><path d="M10 99Q65 110 149 116" stroke="#6f00ff"/><path d="M10 127Q65 134 149 138" stroke="#6f00ff"/><path d="M11 147L145 154" stroke="#ff1493" stroke-width="4" stroke-dasharray="6 2 2 2"/><path d="M23 147L90 52" stroke="#ff7f0e" stroke-width="3"/><path d="M10 30V147" stroke="#00e676" stroke-width="3" stroke-dasharray="5 3"/></g><circle cx="73" cy="77" r="6" fill="#000"/><text x="154" y="26">3</text></svg>
<svg x="1070" y="616" width="162" height="163" viewBox="0 0 162 163"><rect x="1" y="1" width="160" height="161" fill="#fff" stroke="#000" stroke-width="1.500"/><g fill="none" stroke-width="3.500"><path d="M10 30Q60 52 149 59" stroke="#c71585"/><path d="M10 63Q65 80 149 86" stroke="#6f00ff"/><path d="M10 99Q65 110 149 116" stroke="#6f00ff"/><path d="M10 127Q65 134 149 138" stroke="#6f00ff"/><path d="M11 147L145 154" stroke="#ff1493" stroke-width="4" stroke-dasharray="6 2 2 2"/><path d="M23 147L91 52" stroke="#ff7f0e" stroke-width="3"/><path d="M10 30V147" stroke="#00e676" stroke-width="3" stroke-dasharray="5 3"/></g><circle cx="73" cy="78" r="6" fill="#000"/><text x="154" y="26">4</text></svg>
<svg x="1240" y="616" width="162" height="163" viewBox="0 0 162 163"><rect x="2.500" y="2.500" width="157" height="158" fill="#fff" stroke="#0000f5" stroke-width="5"/><g fill="none" stroke-width="3.500"><path d="M9 29Q60 48 142 56" stroke="#c71585"/><path d="M9 59Q60 75 142 82" stroke="#6f00ff"/><path d="M9 95Q60 104 142 110" stroke="#6f00ff"/><path d="M9 121Q60 128 142 131" stroke="#6f00ff"/><path d="M11 140L139 147" stroke="#ff1493" stroke-width="4" stroke-dasharray="6 2 2 2"/><path d="M21 140L84 50" stroke="#ff7f0e" stroke-width="3"/><path d="M9 29V140" stroke="#00e676" stroke-width="3" stroke-dasharray="5 3"/></g><circle cx="68" cy="74" r="6" fill="#000"/><text x="153" y="26">5</text></svg>
<svg x="1410" y="616" width="162" height="163" viewBox="0 0 162 163"><rect x="1" y="1" width="160" height="161" fill="#fff" stroke="#000" stroke-width="1.500"/><g fill="none" stroke-width="3.500"><path d="M10 30Q60 52 149 59" stroke="#c71585"/><path d="M10 63Q65 80 149 86" stroke="#6f00ff"/><path d="M10 99Q65 110 149 116" stroke="#6f00ff"/><path d="M10 127Q65 134 149 138" stroke="#6f00ff"/><path d="M11 147L145 154" stroke="#ff1493" stroke-width="4" stroke-dasharray="6 2 2 2"/><path d="M23 147L89 52" stroke="#ff7f0e" stroke-width="3"/><path d="M10 30V147" stroke="#00e676" stroke-width="3" stroke-dasharray="5 3"/></g><circle cx="71" cy="78" r="6" fill="#000"/><text x="154" y="26">6</text></svg>
<svg x="1580" y="616" width="162" height="163" viewBox="0 0 162 163"><rect x="1" y="1" width="160" height="161" fill="#fff" stroke="#000" stroke-width="1.500"/><g fill="none" stroke-width="3.500"><path d="M10 30Q60 52 149 59" stroke="#c71585"/><path d="M10 63Q65 80 149 86" stroke="#6f00ff"/><path d="M10 99Q65 110 149 116" stroke="#6f00ff"/><path d="M10 127Q65 134 149 138" stroke="#6f00ff"/><path d="M11 147L145 154" stroke="#ff1493" stroke-width="4" stroke-dasharray="6 2 2 2"/><path d="M23 147L89 52" stroke="#ff7f0e" stroke-width="3"/><path d="M10 30V147" stroke="#00e676" stroke-width="3" stroke-dasharray="5 3"/></g><circle cx="70" cy="79" r="6" fill="#000"/><text x="154" y="26">7</text></svg>
<svg x="1750" y="616" width="120" height="163" viewBox="0 0 120 163"><rect x="1" y="1" width="160" height="161" fill="#fff" stroke="#000" stroke-width="1.500"/><g fill="none" stroke-width="3.500"><path d="M10 30Q60 52 149 59" stroke="#c71585"/><path d="M10 63Q65 80 149 86" stroke="#6f00ff"/><path d="M10 99Q65 110 149 116" stroke="#6f00ff"/><path d="M10 127Q65 134 149 138" stroke="#6f00ff"/><path d="M11 147L145 154" stroke="#ff1493" stroke-width="4" stroke-dasharray="6 2 2 2"/><path d="M23 147L90 52" stroke="#ff7f0e" stroke-width="3"/><path d="M10 30V147" stroke="#00e676" stroke-width="3" stroke-dasharray="5 3"/></g><circle cx="70" cy="79" r="6" fill="#000"/></svg>
</g>
<path d="M738 785l-5 5.500 5 5.500zM1856 785l5 5.500-5 5.500z" fill="#3f5f8c"/>
<path d="M905 786v9M907 786v9M909 786v9M911 786v9" stroke="#5a6a80"/>

<!-- palette icons -->
<path d="M1861 834h9l-4.500 5z" fill="#5f7cc0"/>
<path d="M1882 829h6M1883 829v9h4v-9M1885 838v5" stroke="#5f7cc0" fill="none" stroke-width="1.400"/>
<path d="M1902 831l7 10M1909 831l-7 10" stroke="#5f7cc0" stroke-width="1.400"/>
<path d="M262 869l10 11-4 0 3 7-3 1-3-7-3 3z" fill="#000"/>
<path d="M270 926h20M308 926h20M323 920l5 6-5 6" stroke="#333" fill="none"/><rect x="290" y="916" width="18" height="19" fill="#eef" stroke="#222"/>
<path d="M348 932h12l-6 7zM491 932h12l-6 7zM605 932h12l-6 7zM719 932h12l-6 7z" fill="#000"/>
<path d="M390 908v54l-12-27z" fill="#aaa"/>
<path d="M1895 908v54l11-27z" fill="#aaa"/>
<path d="M424 898L459 927 424 956z" fill="url(#gv)" stroke="#222"/>
<path d="M572 898L539 927 572 956z" fill="url(#gv)" stroke="#222"/>
<g stroke="#333" fill="url(#gh)">
<rect x="666" y="898" width="17" height="8"/><rect x="642" y="906" width="13" height="11"/>
<path d="M654 906h42v30l-15 16v4h-13v-4l-14-16z"/></g>
<path d="M654 917h16" stroke="#222"/>

<!-- zoom controls -->
<ellipse cx="1724" cy="1007" rx="8" ry="8" fill="#d8e2ee" stroke="#666"/><path d="M1720 1007h8" stroke="#444" stroke-width="2"/>
<ellipse cx="1906" cy="1007" rx="8" ry="8" fill="#d8e2ee" stroke="#666"/><path d="M1902 1007h8M1906 1003v8" stroke="#444" stroke-width="2"/>
<path d="M1809 993h10v16l-5 5-5-5z" fill="#f4f4f4" stroke="#8a8a8a"/>
</svg>
</body></html>
